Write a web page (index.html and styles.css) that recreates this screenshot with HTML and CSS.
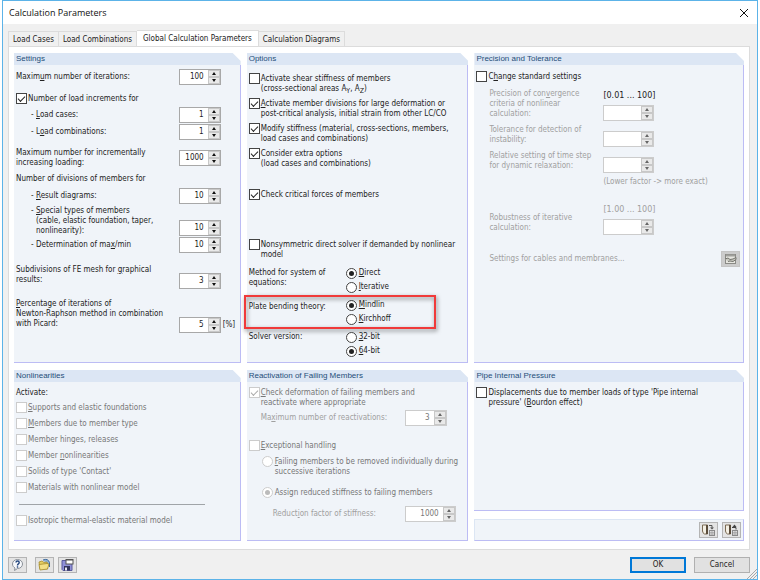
FILE: index.html
```html
<!DOCTYPE html>
<html lang="en">
<head>
  <meta charset="UTF-8">
  <meta name="viewport" content="width=device-width, initial-scale=1.0">
  <title>Calculation Parameters</title>
  <link rel="stylesheet" href="styles.css">
</head>
<body>

<div class="dialog">
  <header class="title-bar">
    <h1>Calculation Parameters</h1>
    <button class="close-btn" aria-label="Close">
      <svg viewBox="0 0 10 10" width="10" height="10"><path d="M1 1l8 8M9 1l-8 8" stroke="#111" fill="none"/></svg>
    </button>
  </header>

  <nav class="tabs">
    <button class="tab">Load Cases</button>
    <button class="tab">Load Combinations</button>
    <button class="tab active">Global Calculation Parameters</button>
    <button class="tab">Calculation Diagrams</button>
  </nav>

  <main class="page">

    <!-- Settings -->
    <section class="group">
      <h2>Settings</h2>
      <div class="group-body">
        <div class="row mt-4">
          <label for="max-iter">Maxim<u>u</u>m number of iterations:</label>
          <span class="spinner"><input type="number" id="max-iter" value="100"><span class="arrows"><button class="up" aria-label="Up"></button><button class="down" aria-label="Down"></button></span></span>
          <span class="unit"></span>
        </div>
        <label class="check mt-8"><input type="checkbox" checked><span>Number of load increments for</span></label>
        <div class="row mt-2">
          <label class="dash" for="inc-cases"><u>L</u>oad cases:</label>
          <span class="spinner"><input type="number" id="inc-cases" value="1"><span class="arrows"><button class="up" aria-label="Up"></button><button class="down" aria-label="Down"></button></span></span>
          <span class="unit"></span>
        </div>
        <div class="row mt-1">
          <label class="dash" for="inc-combos">L<u>o</u>ad combinations:</label>
          <span class="spinner"><input type="number" id="inc-combos" value="1"><span class="arrows"><button class="up" aria-label="Up"></button><button class="down" aria-label="Down"></button></span></span>
          <span class="unit"></span>
        </div>
        <div class="row mt-8">
          <label for="max-inc">Maximum number for incrementally<br>increasing loading:</label>
          <span class="spinner"><input type="number" id="max-inc" value="1000"><span class="arrows"><button class="up" aria-label="Up"></button><button class="down" aria-label="Down"></button></span></span>
          <span class="unit"></span>
        </div>
        <p class="mt-6">Number of divisions of members for</p>
        <div class="row mt-4">
          <label class="dash" for="div-result"><u>R</u>esult diagrams:</label>
          <span class="spinner"><input type="number" id="div-result" value="10"><span class="arrows"><button class="up" aria-label="Up"></button><button class="down" aria-label="Down"></button></span></span>
          <span class="unit"></span>
        </div>
        <div class="row bottom mt-2">
          <label class="dash" for="div-special"><u>S</u>pecial types of members<br>(cable, elastic foundation, taper,<br>nonlinearity):</label>
          <span class="spinner"><input type="number" id="div-special" value="10"><span class="arrows"><button class="up" aria-label="Up"></button><button class="down" aria-label="Down"></button></span></span>
          <span class="unit"></span>
        </div>
        <div class="row mt-1">
          <label class="dash" for="div-maxmin">Determination of ma<u>x</u>/min</label>
          <span class="spinner"><input type="number" id="div-maxmin" value="10"><span class="arrows"><button class="up" aria-label="Up"></button><button class="down" aria-label="Down"></button></span></span>
          <span class="unit"></span>
        </div>
        <div class="row raised mt-12">
          <label for="subdiv">Subdivisions of FE mesh for <u>g</u>raphical<br>results:</label>
          <span class="spinner"><input type="number" id="subdiv" value="3"><span class="arrows"><button class="up" aria-label="Up"></button><button class="down" aria-label="Down"></button></span></span>
          <span class="unit"></span>
        </div>
        <div class="row raised mt-10">
          <label for="picard"><u>P</u>ercentage of iterations of<br>Newton-Raphson method in combination<br>with Picard:</label>
          <span class="spinner"><input type="number" id="picard" value="5"><span class="arrows"><button class="up" aria-label="Up"></button><button class="down" aria-label="Down"></button></span></span>
          <span class="unit">[%]</span>
        </div>
      </div>
    </section>

    <!-- Options -->
    <section class="group">
      <h2>Options</h2>
      <div class="group-body">
        <label class="check mt-8"><input type="checkbox"><span>Activate shear stiffness of members<br>(cross-sectional areas A<sub>Y</sub>, A<sub>Z</sub>)</span></label>
        <label class="check mt-4"><input type="checkbox" checked><span><u>A</u>ctivate member divisions for large deformation or<br>post-critical analysis, initial strain from other LC/CO</span></label>
        <label class="check mt-4"><input type="checkbox" checked><span>Modify stiffness (material, cross-sections, members,<br>load cases and combinations)</span></label>
        <label class="check mt-4"><input type="checkbox" checked><span>Consider extra options<br>(load cases and combinations)</span></label>
        <label class="check mt-20"><input type="checkbox" checked><span>Check critical forces of members</span></label>
        <label class="check mt-38"><input type="checkbox"><span>Nonsymmetric direct solver if demanded by nonlinear<br>model</span></label>

        <div class="choice mt-6" role="radiogroup" aria-labelledby="method-label">
          <p id="method-label">Method for system of<br>equations:</p>
          <div class="radios">
            <label class="radio"><input type="radio" name="method" checked><span><u>D</u>irect</span></label>
            <label class="radio"><input type="radio" name="method"><span><u>I</u>terative</span></label>
          </div>
        </div>
        <div class="choice marked mt-4" role="radiogroup" aria-labelledby="plate-label">
          <p id="plate-label">Plate bending theory:</p>
          <div class="radios">
            <label class="radio"><input type="radio" name="plate" checked><span><u>M</u>indlin</span></label>
            <label class="radio"><input type="radio" name="plate"><span><u>K</u>irchhoff</span></label>
          </div>
        </div>
        <div class="choice mt-4" role="radiogroup" aria-labelledby="solver-label">
          <p id="solver-label">Solver version:</p>
          <div class="radios">
            <label class="radio"><input type="radio" name="solver"><span><u>3</u>2-bit</span></label>
            <label class="radio"><input type="radio" name="solver" checked><span><u>6</u>4-bit</span></label>
          </div>
        </div>
      </div>
    </section>

    <!-- Precision and Tolerance -->
    <section class="group">
      <h2>Precision and Tolerance</h2>
      <div class="group-body">
        <label class="check mt-6"><input type="checkbox"><span>C<u>h</u>ange standard settings</span></label>
        <div class="precision top mt-6">
          <label class="off" for="prec">Precision of con<u>v</u>ergence<br>criteria of nonlinear<br>calculation:</label>
          <div class="stack">
            <span class="range">[0.01 ... 100]</span>
            <span class="spinner wide"><input type="number" id="prec" disabled><span class="arrows"><button class="up" aria-label="Up" disabled></button><button class="down" aria-label="Down" disabled></button></span></span>
          </div>
        </div>
        <div class="precision mt-4">
          <label class="off" for="tol">Tolerance for detection of<br>instability:</label>
          <span class="spinner wide"><input type="number" id="tol" disabled><span class="arrows"><button class="up" aria-label="Up" disabled></button><button class="down" aria-label="Down" disabled></button></span></span>
        </div>
        <div class="precision mt-4">
          <label class="off" for="rel">Relative setting of time step<br>for dynamic relaxation:</label>
          <span class="spinner wide"><input type="number" id="rel" disabled><span class="arrows"><button class="up" aria-label="Up" disabled></button><button class="down" aria-label="Down" disabled></button></span></span>
        </div>
        <div class="precision mt-4">
          <span></span>
          <span class="note off">(Lower factor -&gt; more exact)</span>
        </div>
        <div class="precision mt-16">
          <label class="off" for="robust">Robustness of iterative<br>calculation:</label>
          <div class="stack">
            <span class="range off">[1.00 ... 100]</span>
            <span class="spinner wide"><input type="number" id="robust" disabled><span class="arrows"><button class="up" aria-label="Up" disabled></button><button class="down" aria-label="Down" disabled></button></span></span>
          </div>
        </div>
        <div class="cables mt-16">
          <span class="off">Settings for cables and membranes...</span>
          <button class="icon-btn" aria-label="Settings for cables and membranes" disabled>
            <svg viewBox="0 0 17 14" width="17" height="14">
              <rect x="3.500" y="2.500" width="10" height="9" fill="#e6e6e0" stroke="#8a8a86"/>
              <path d="M4 3.500h9" stroke="#a0a09c" stroke-width="2"/>
              <path d="M3 7l3-1 2 1.500 3-.5 3-1.500v2l-3 2-3-.5-2 .5" stroke="#74746e" fill="#c8c8c0"/>
            </svg>
          </button>
        </div>
      </div>
    </section>

    <!-- Nonlinearities -->
    <section class="group">
      <h2>Nonlinearities</h2>
      <div class="group-body">
        <p class="mt-6">Activate:</p>
        <label class="check mt-4"><input type="checkbox" disabled><span><u>S</u>upports and elastic foundations</span></label>
        <label class="check mt-4"><input type="checkbox" disabled><span><u>M</u>embers due to member type</span></label>
        <label class="check mt-4"><input type="checkbox" disabled><span>Member hinges, releases</span></label>
        <label class="check mt-4"><input type="checkbox" disabled><span>Member <u>n</u>onlinearities</span></label>
        <label class="check mt-4"><input type="checkbox" disabled><span>Solids of type 'Contact'</span></label>
        <label class="check mt-4"><input type="checkbox" disabled><span>Materials with nonlinear model</span></label>
        <hr class="mt-10">
        <label class="check mt-10"><input type="checkbox" disabled><span>Isotropic thermal-elastic material model</span></label>
      </div>
    </section>

    <!-- Reactivation of Failing Members -->
    <section class="group">
      <h2>Reactivation of Failing Members</h2>
      <div class="group-body">
        <label class="check mt-5"><input type="checkbox" checked disabled><span><u>C</u>heck deformation of failing members and<br>reactivate where appropriate</span></label>
        <div class="reaction mt-2">
          <label class="off" for="reacts">Ma<u>x</u>imum number of reactivations:</label>
          <span class="spinner"><input type="number" id="reacts" value="3" disabled><span class="arrows"><button class="up" aria-label="Up" disabled></button><button class="down" aria-label="Down" disabled></button></span></span>
        </div>
        <label class="check mt-14"><input type="checkbox" disabled><span><u>E</u>xceptional handling</span></label>
        <label class="radio nested mt-4"><input type="radio" name="failing" disabled><span><u>F</u>ailing members to be removed individually during<br>successive iterations</span></label>
        <label class="radio nested mt-10"><input type="radio" name="failing" checked disabled><span>Assign reduced stiffness to failing members</span></label>
        <div class="reaction deep mt-8">
          <label class="off" for="reduction">Reduct<u>i</u>on factor of stiffness:</label>
          <span class="spinner wide"><input type="number" id="reduction" value="1000" disabled><span class="arrows"><button class="up" aria-label="Up" disabled></button><button class="down" aria-label="Down" disabled></button></span></span>
        </div>
      </div>
    </section>

    <!-- Pipe Internal Pressure -->
    <div class="side">
      <section class="group">
        <h2>Pipe Internal Pressure</h2>
        <div class="group-body">
          <label class="check mt-5"><input type="checkbox"><span>Displacements due to member loads of type 'Pipe internal<br>pressure' (<u>B</u>ourdon effect)</span></label>
        </div>
      </section>
      <div class="tool-strip">
        <button class="icon-btn" aria-label="Set standard values">
          <svg viewBox="0 0 17 14" width="17" height="14">
            <path d="M2.500 2h5v9h-3q-2-1-2-3z" fill="#f4f0e4" stroke="#7b6b54"/>
            <path d="M7 2v9" stroke="#5a4c3a" stroke-width="2"/>
            <path d="M9 2.500h3v2.500" fill="none" stroke="#555"/>
            <path d="M10 4.500h4l-2 2z" fill="#555"/>
            <rect x="9.500" y="7.500" width="5" height="5" fill="#ddd" stroke="#8a8a8a"/>
            <path d="M10 9.500h4M10 11h4M12 8v4" stroke="#999" stroke-width=".6"/>
          </svg>
        </button>
        <button class="icon-btn" aria-label="Save as standard">
          <svg viewBox="0 0 17 14" width="17" height="14">
            <path d="M2.500 2h5v9h-3q-2-1-2-3z" fill="#f4f0e4" stroke="#7b6b54"/>
            <path d="M7 2v9" stroke="#5a4c3a" stroke-width="2"/>
            <path d="M9 4.500h4v2" fill="none" stroke="#444"/>
            <path d="M9.500 4l2-2.500 2 2.500z" fill="#444"/>
            <rect x="9.500" y="7.500" width="5" height="5" fill="#ddd" stroke="#8a8a8a"/>
            <path d="M10 9.500h4M10 11h4M12 8v4" stroke="#999" stroke-width=".6"/>
          </svg>
        </button>
      </div>
    </div>
  </main>

  <footer class="footer">
    <button class="icon-btn" aria-label="Help">
      <svg viewBox="0 0 17 14" width="17" height="14">
        <path d="M8.500 1.500c3 0 5 2 5 4.500s-2 4.500-5 4.500l-3 2 .5-2.500c-1.500-1-2.500-2-2.500-4 0-2.500 2-4.500 5-4.500z" fill="#f6f8fb" stroke="#8a9098"/>
        <path d="M7 4.500q0-1.500 1.600-1.500t1.600 1.500q0 1-1 1.500-.7.500-.7 1.500" fill="none" stroke="#24477e" stroke-width="1.400"/>
        <rect x="7.800" y="8.300" width="1.400" height="1.400" fill="#24477e"/>
      </svg>
    </button>
    <button class="icon-btn open-btn" aria-label="Open">
      <svg viewBox="0 0 17 14" width="17" height="14">
        <path d="M7 2q5-2 6.500 2.500V9" fill="#8fb2d8" stroke="#3d6a9c"/>
        <path d="M3 4l3-1 2 1.500 3-.5.500 2v5H4z" fill="#e6cf62" stroke="#a58b2c" stroke-width=".8"/>
        <path d="M3 6.500l8-1 2 .5-1.500 5-7.500 1z" fill="#f3e187" stroke="#a58b2c" stroke-width=".8"/>
      </svg>
    </button>
    <button class="icon-btn" aria-label="Save">
      <svg viewBox="0 0 17 14" width="17" height="14">
        <path d="M3 2.500h10v10H4l-1-1z" fill="#8f90d8" stroke="#5a5b9c"/>
        <rect x="5" y="8" width="6" height="4.500" fill="#33355e"/>
        <rect x="6" y="9.500" width="2" height="3" fill="#e8e8f4"/>
        <rect x="7" y="1.500" width="7" height="4.500" fill="#fff" stroke="#555"/>
        <path d="M7 2h7" stroke="#555"/>
      </svg>
    </button>
    <span class="filler"></span>
    <button class="btn default">OK</button>
    <button class="btn">Cancel</button>
  </footer>

  <svg class="grip" viewBox="0 0 10 10" width="10" height="10"><path d="M0 10L10 0M3 10l7-7M6 10l4-4" stroke="#a8a8a8" fill="none"/></svg>
</div>

<script src="script.js"></script>
</body>
</html>
```

FILE: styles.css
```css
*,
*::before,
*::after {
  box-sizing: border-box;
}

body {
  margin: 0;
  background: #fff;
  color: #222;
  font-family: 'DejaVu Sans Condensed', 'DejaVu Sans', sans-serif;
  font-size: 8px;
  line-height: 10px;
}

h1, h2, p {
  margin: 0;
  font-weight: normal;
}

button, input {
  font: inherit;
  color: inherit;
  margin: 0;
}

sub {
  font-size: 7px;
  line-height: 0;
  vertical-align: -2px;
}

.dialog {
  position: relative;
  display: flex;
  flex-direction: column;
  min-height: 100vh;
  margin: 0 2px;
  background: #f0f0f0;
  border: 1px solid #5cb3e8;
}

/* Title bar */
.title-bar {
  display: flex;
  align-items: center;
  justify-content: space-between;
  height: 23px;
  padding: 0 8px 0 6px;
  background: #fff;
}

.title-bar h1 {
  font-family: 'Open Sans', sans-serif;
  font-size: 9px;
  color: #111;
}

.close-btn {
  display: flex;
  padding: 0;
  border: none;
  background: none;
}

/* Tabs */
.tabs {
  display: flex;
  align-items: flex-end;
  height: 22px;
  padding-left: 5px;
}

.tab {
  height: 15px;
  padding: 1px 4px 0;
  border: 1px solid #dcdcdc;
  border-bottom: none;
  border-left: none;
  background: #f0f0f0;
  white-space: nowrap;
}

.tab:first-child {
  border-left: 1px solid #dcdcdc;
}

.tab.active {
  height: 17px;
  margin-bottom: -1px;
  padding: 0 6px 1px;
  background: #fff;
}

.page {
  flex: 1;
  display: grid;
  grid-template-columns: 227fr 222fr 270fr;
  grid-template-rows: auto 1fr;
  gap: 7px 6px;
  margin: 0 7px 0 5px;
  padding: 6px 5px 8px 5px;
  background: #fff;
  border: 1px solid #dcdcdc;
}

/* Group boxes */
.group {
  display: flex;
  flex-direction: column;
}

.group h2 {
  height: 12px;
  padding-left: 2px;
  background: #dce6f4;
  color: #1f4e79;
  font-family: 'Liberation Sans', Arial, sans-serif;
  font-size: 8px;
  line-height: 12px;
  clip-path: polygon(0 0, calc(100% - 8px) 0, 100% 8px, 100% 100%, 0 100%);
}

.group-body {
  flex: 1;
  padding: 0 2px 4px;
  background: #f0f4f9;
  border-right: 1px solid #bcbcf4;
  border-bottom: 1px solid #bcbcf4;
}

.side {
  display: flex;
  flex-direction: column;
  gap: 8px;
}

.side .group {
  flex: 1;
}

.tool-strip {
  display: flex;
  justify-content: flex-end;
  gap: 4px;
  padding: 2px;
  background: #f0f4f9;
  border: 1px solid #dce6f4;
  border-right-color: #bcbcf4;
  border-bottom-color: #bcbcf4;
}

hr {
  width: 84%;
  height: 1px;
  margin: 0 0 0 3px;
  border: none;
  background: #a0a4a8;
}

/* Rows */
.row {
  display: grid;
  grid-template-columns: 1fr 42px 17px;
  align-items: center;
}

.row label {
  white-space: nowrap;
}

.row.bottom,
.row.raised {
  align-items: end;
}

.row.raised label {
  padding-bottom: 4px;
}

.dash {
  position: relative;
  padding-left: 20px;
}

.dash::before {
  content: "-";
  position: absolute;
  left: 15px;
}

.unit {
  padding-left: 2px;
  align-self: center;
  white-space: nowrap;
}

.raised .unit {
  align-self: end;
  padding-bottom: 3px;
}

.precision {
  display: grid;
  grid-template-columns: 114px 1fr;
  align-items: end;
  padding-left: 13px;
  white-space: nowrap;
}

.precision label {
  padding-bottom: 2px;
}

.precision.top label {
  align-self: start;
}

.stack {
  display: flex;
  flex-direction: column;
  gap: 4px;
  padding-top: 2px;
}

.stack .range {
  font-family: 'DejaVu Sans', sans-serif;
}

.cables {
  display: flex;
  align-items: center;
  justify-content: space-between;
  padding: 0 1px 0 13px;
}

.reaction {
  display: grid;
  grid-template-columns: 144px 1fr;
  align-items: center;
  padding-left: 12px;
  white-space: nowrap;
}

.reaction.deep {
  grid-template-columns: 132px 1fr;
  padding-left: 24px;
}

.off {
  color: #a0a0a0;
}

/* Check boxes and radios */
.check,
.radio {
  display: flex;
  align-items: flex-start;
  gap: 2px;
  white-space: nowrap;
}

.check input,
.radio input {
  appearance: none;
  flex: none;
  display: grid;
  place-items: center;
  width: 11px;
  height: 11px;
  background: #fff;
  border: 1px solid #444;
}

.check {
  min-height: 12px;
  gap: 1px;
}

.check span {
  padding-top: 1px;
}

.check input:checked::after {
  content: "";
  width: 7px;
  height: 4px;
  margin-bottom: 2px;
  border-left: 1px solid #222;
  border-bottom: 1px solid #222;
  transform: rotate(-45deg);
}

.radio input {
  border-radius: 50%;
}

.radio {
  height: 14px;
  align-items: center;
}

.radio input:checked::after {
  content: "";
  width: 5px;
  height: 5px;
  border-radius: 50%;
  background: #222;
}

.radio.nested {
  height: auto;
  align-items: flex-start;
  padding-left: 13px;
}

.radio.nested span {
  padding-top: 1px;
}

input:disabled + span {
  color: #777;
}

.check input:disabled,
.radio input:disabled {
  border-color: #ccc;
}

.check input:disabled::after {
  border-color: #aaa;
}

.radio input:disabled::after {
  background: #bbb;
}

.choice {
  position: relative;
  display: grid;
  grid-template-columns: 97px 1fr;
}

.choice p {
  padding-top: 2px;
}

.choice.marked p {
  padding-top: 4px;
}

/* Red frame round the plate bending options */
.marked::after {
  content: "";
  position: absolute;
  top: -3px;
  left: -5px;
  width: 192px;
  height: 34px;
  border: 2px solid #f03a3a;
  filter: drop-shadow(1px 2px 2px rgba(0, 0, 0, 0.5));
  pointer-events: none;
}

/* Number fields */
.spinner {
  display: flex;
  width: 42px;
  height: 16px;
  background: #fff;
  border: 1px solid #a8a8a8;
}

.spinner.wide {
  width: 51px;
}

.spinner input {
  appearance: textfield;
  flex: 1;
  min-width: 0;
  padding: 0 4px 0 0;
  border: none;
  background: none;
  text-align: right;
}

.spinner input::-webkit-inner-spin-button {
  display: none;
}

.spinner input:disabled {
  color: #777;
}

.arrows {
  display: flex;
  flex-direction: column;
  width: 12px;
}

.arrows button {
  flex: 1;
  display: grid;
  place-items: center;
  padding: 0;
  background: #e9e9e9;
  border: 1px solid #c8c8c8;
}

.arrows button::before {
  content: "";
  border: 2px solid transparent;
}

.arrows .up::before {
  border-top: none;
  border-bottom: 3px solid #111;
}

.arrows .down::before {
  border-bottom: none;
  border-top: 3px solid #111;
}

.arrows .up:disabled::before {
  border-bottom-color: #666;
}

.arrows .down:disabled::before {
  border-top-color: #666;
}

.spinner:has(input:disabled) {
  border-color: #ccc;
}

/* Footer */
.footer {
  display: flex;
  align-items: center;
  gap: 4px;
  height: 29px;
  padding: 1px 7px 0 5px;
}

.icon-btn {
  display: flex;
  align-items: center;
  justify-content: center;
  width: 19px;
  height: 16px;
  padding: 0;
  background: #e4e4e4;
  border: 1px solid #b4b4b4;
}

.icon-btn:disabled {
  background: #ccc;
  border-color: #c4c4c4;
}

.open-btn {
  margin-left: 4px;
}

.filler {
  flex: 1;
}

.btn {
  width: 56px;
  height: 16px;
  padding: 0;
  background: #e1e1e1;
  border: 1px solid #b0b0b0;
}

.btn.default {
  margin-right: 4px;
  border: 2px solid #0078d7;
}

.grip {
  position: absolute;
  right: 0;
  bottom: 0;
}

/* Vertical spacing */
.mt-1 { margin-top: 1px; }
.mt-2 { margin-top: 2px; }
.mt-4 { margin-top: 4px; }
.mt-5 { margin-top: 5px; }
.mt-6 { margin-top: 6px; }
.mt-8 { margin-top: 8px; }
.mt-10 { margin-top: 10px; }
.mt-12 { margin-top: 12px; }
.mt-14 { margin-top: 14px; }
.mt-16 { margin-top: 16px; }
.mt-20 { margin-top: 20px; }
.mt-38 { margin-top: 38px; }
```

FILE: script.js
```js
document.querySelectorAll('.spinner').forEach(spinner => {
  const input = spinner.querySelector('input');
  spinner.querySelector('.up').addEventListener('click', () => input.stepUp());
  spinner.querySelector('.down').addEventListener('click', () => input.stepDown());
});
```
